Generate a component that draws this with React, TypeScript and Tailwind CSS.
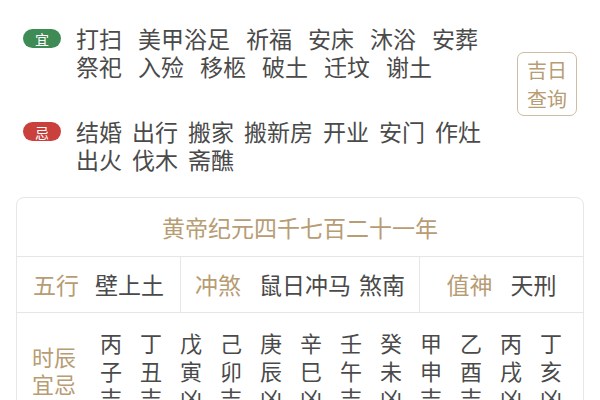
const FONT = { fontFamily: '"Noto Sans CJK SC", "Noto Sans", sans-serif' };

const yi = [
  ["打扫", "美甲浴足", "祈福", "安床", "沐浴", "安葬"],
  ["祭祀", "入殓", "移柩", "破土", "迁坟", "谢土"],
];

const ji = [
  ["结婚", "出行", "搬家", "搬新房", "开业", "安门", "作灶"],
  ["出火", "伐木", "斋醮"],
];

const hours = [
  ["丙", "子", "吉"],
  ["丁", "丑", "吉"],
  ["戊", "寅", "凶"],
  ["己", "卯", "吉"],
  ["庚", "辰", "凶"],
  ["辛", "巳", "凶"],
  ["壬", "午", "吉"],
  ["癸", "未", "凶"],
  ["甲", "申", "吉"],
  ["乙", "酉", "吉"],
  ["丙", "戌", "凶"],
  ["丁", "亥", "凶"],
];

function Group({
  badge,
  badgeClass,
  lines,
  gapClass,
  className,
}: {
  badge: string;
  badgeClass: string;
  lines: string[][];
  gapClass: string;
  className?: string;
}) {
  return (
    <div className={`flex ${className ?? ""}`}>
      <div
        className={`mt-[5px] flex h-[19px] w-[38px] shrink-0 items-center justify-center rounded-full text-[14px] leading-none text-white ${badgeClass}`}
      >
        {badge}
      </div>
      <div className="ml-[15px] text-[23px] leading-[28px] text-[#4a4a4a]">
        {lines.map((line, i) => (
          <div key={i} className={`flex ${gapClass}`}>
            {line.map((w) => (
              <span key={w}>{w}</span>
            ))}
          </div>
        ))}
      </div>
    </div>
  );
}

export default function App() {
  return (
    <div className="h-[400px] w-[600px] overflow-hidden bg-white" style={FONT}>
      <div className="flex pl-[23px] pt-[24px]">
        <div className="w-[494px]">
          <Group badge="宜" badgeClass="bg-[#3f8b55]" lines={yi} gapClass="gap-x-[16px]" />
          <Group
            badge="忌"
            badgeClass="bg-[#c9403c]"
            lines={ji}
            gapClass="gap-x-[10px]"
            className="mt-[37px]"
          />
        </div>
        <div className="mt-[28px] flex h-[64px] w-[60px] flex-col items-center justify-center rounded-[7px] border border-[#cdbda2] text-[20px] leading-[29px] text-[#b79c74]">
          <span>吉日</span>
          <span>查询</span>
        </div>
      </div>

      <div className="mx-4 mt-[24px] rounded-[8px] border border-[#e6e6e6]">
        <div className="flex h-[59px] items-center justify-center border-b border-[#e6e6e6] text-[23px] text-[#b79c74]">
          黄帝纪元四千七百二十一年
        </div>
        <div className="flex h-[56px] border-b border-[#e6e6e6] text-[23px]">
          <div className="flex w-[163px] items-center justify-center gap-x-[16px]">
            <span className="text-[#b79c74]">五行</span>
            <span className="text-[#4a4a4a]">壁上土</span>
          </div>
          <div className="flex w-[239px] items-center justify-center gap-x-[18px] border-l border-[#e6e6e6]">
            <span className="text-[#b79c74]">冲煞</span>
            <span className="flex gap-x-[8px] text-[#4a4a4a]">
              <span>鼠日冲马</span>
              <span>煞南</span>
            </span>
          </div>
          <div className="flex flex-1 items-center justify-center gap-x-[18px] border-l border-[#e6e6e6]">
            <span className="text-[#b79c74]">值神</span>
            <span className="text-[#4a4a4a]">天刑</span>
          </div>
        </div>
        <div className="flex items-center pt-[16px] pb-[12px]">
          <div className="flex w-[74px] flex-col items-center text-[22px] leading-[27px] text-[#b79c74]">
            <span>时辰</span>
            <span>宜忌</span>
          </div>
          <div className="grid grid-cols-[repeat(12,40px)] text-[22px] leading-[27.5px] text-[#4a4a4a]">
            {hours.map((h, i) => (
              <div key={i} className="flex flex-col items-center">
                {h.map((c, j) => (
                  <span key={j}>{c}</span>
                ))}
              </div>
            ))}
          </div>
        </div>
      </div>
    </div>
  );
}
